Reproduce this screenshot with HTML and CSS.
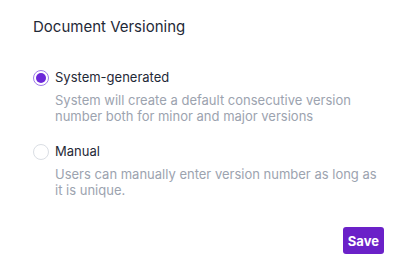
FILE: index.html
```html
<!DOCTYPE html>
<html lang="en">
<head>
<meta charset="utf-8">
<title>Document Versioning</title>
<link rel="stylesheet" href="styles.css">
</head>
<body>
<div class="panel">
  <h2 class="title">Document Versioning</h2>
  <div class="options">
    <label class="option">
      <span class="option-row">
        <input class="radio" type="radio" name="versioning" checked>
        <span class="option-label">System-generated</span>
      </span>
      <span class="option-desc">System will create a default consecutive version number both for minor and major versions</span>
    </label>
    <label class="option">
      <span class="option-row">
        <input class="radio" type="radio" name="versioning">
        <span class="option-label">Manual</span>
      </span>
      <span class="option-desc">Users can manually enter version number as long as it is unique.</span>
    </label>
  </div>
  <div class="actions">
    <button class="save-btn" type="button">Save</button>
  </div>
</div>
</body>
</html>
```

FILE: styles.css
```css
* { box-sizing: border-box; }
html, body {
  margin: 0;
  padding: 0;
  background: #ffffff;
}
body {
  font-family: Inter, "Noto Sans", sans-serif;
  width: 406px;
  height: 273px;
  overflow: hidden;
}
.panel {
  display: flex;
  flex-direction: column;
  padding: 17px 22px 0 33px;
}
.title {
  margin: 0;
  font-size: 15px;
  line-height: 20px;
  font-weight: 400;
  color: #1f2937;
}
.options {
  display: flex;
  flex-direction: column;
  gap: 19px;
  margin-top: 32px;
}
.option {
  display: flex;
  flex-direction: column;
  cursor: pointer;
}
.option-row {
  display: flex;
  align-items: center;
  gap: 6px;
  height: 17px;
}
.radio {
  appearance: none;
  -webkit-appearance: none;
  margin: 0;
  width: 16px;
  height: 16px;
  border-radius: 50%;
  border: 1px solid #dadee4;
  background: #ffffff;
  flex: none;
  display: grid;
  place-items: center;
}
.radio:checked {
  border-color: #9f7aea;
}
.radio:checked::after {
  content: "";
  width: 10px;
  height: 10px;
  border-radius: 50%;
  background: #6d28d9;
}
.option-label {
  font-size: 13px;
  line-height: 17px;
  color: #1f2937;
}
.option-desc {
  margin: 6px 0 0 22px;
  font-size: 13px;
  line-height: 16px;
  color: #9ca3af;
}
.actions {
  display: flex;
  justify-content: flex-end;
  margin-top: 29px;
}
.save-btn {
  font-family: Inter, "Noto Sans", sans-serif;
  font-size: 13px;
  font-weight: 700;
  color: #ffffff;
  background: #6b21c8;
  border: none;
  border-radius: 3px;
  height: 27px;
  padding: 0 5px;
  cursor: pointer;
}
```
